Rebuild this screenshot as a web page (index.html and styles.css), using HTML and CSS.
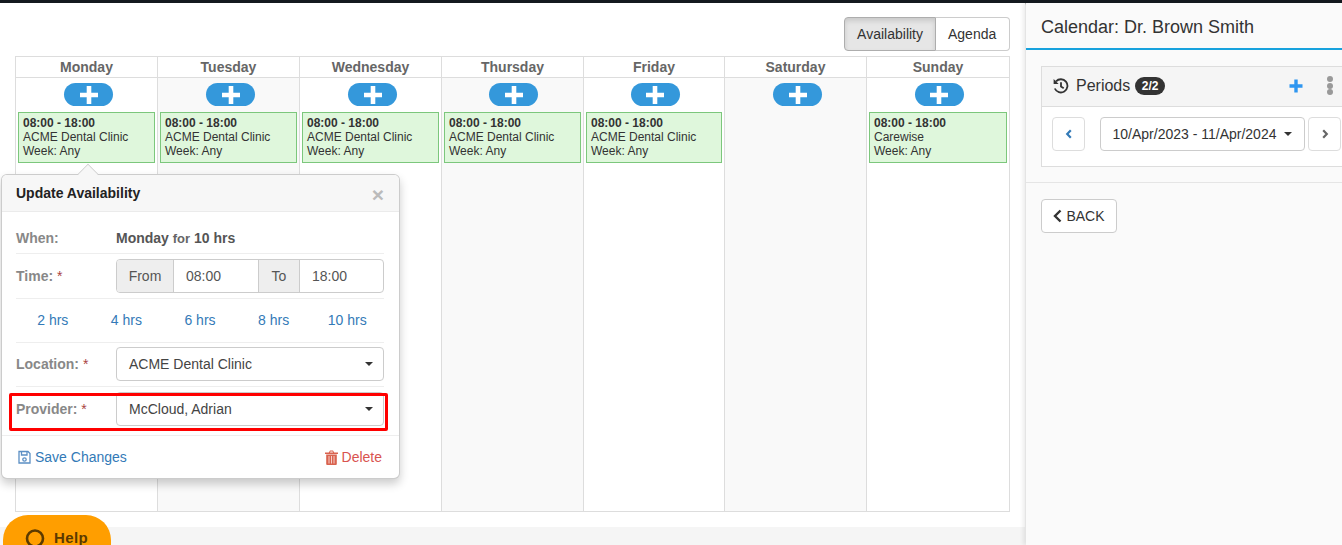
FILE: index.html
```html
<!DOCTYPE html>
<html lang="en">
<head>
	<meta charset="UTF-8">
	<title>Calendar</title>
	<link rel="stylesheet" href="styles.css">
</head>
<body>
	<div class="topbar"></div>
	<div class="page">
		<div class="main">
			<div class="toolbar">
				<div class="switch">
					<a class="switch-btn active">Availability</a>
					<a class="switch-btn">Agenda</a>
				</div>
			</div>
			<div class="calendar">
				<div class="day-head">Monday</div>
				<div class="day-head">Tuesday</div>
				<div class="day-head">Wednesday</div>
				<div class="day-head">Thursday</div>
				<div class="day-head">Friday</div>
				<div class="day-head">Saturday</div>
				<div class="day-head">Sunday</div>

				<div class="day">
					<a class="add"><svg width="18" height="18" viewBox="0 0 18 18"><path d="M9 0v18M0 9h18" stroke="#fff" stroke-width="4.6"/></svg></a>
					<div class="slot"><b>08:00 - 18:00</b><br>ACME Dental Clinic<br>Week: Any</div>
				</div>
				<div class="day shade">
					<a class="add"><svg width="18" height="18" viewBox="0 0 18 18"><path d="M9 0v18M0 9h18" stroke="#fff" stroke-width="4.6"/></svg></a>
					<div class="slot"><b>08:00 - 18:00</b><br>ACME Dental Clinic<br>Week: Any</div>
				</div>
				<div class="day">
					<a class="add"><svg width="18" height="18" viewBox="0 0 18 18"><path d="M9 0v18M0 9h18" stroke="#fff" stroke-width="4.6"/></svg></a>
					<div class="slot"><b>08:00 - 18:00</b><br>ACME Dental Clinic<br>Week: Any</div>
				</div>
				<div class="day shade">
					<a class="add near"><svg width="18" height="18" viewBox="0 0 18 18"><path d="M9 0v18M0 9h18" stroke="#fff" stroke-width="4.6"/></svg></a>
					<div class="slot"><b>08:00 - 18:00</b><br>ACME Dental Clinic<br>Week: Any</div>
				</div>
				<div class="day">
					<a class="add near"><svg width="18" height="18" viewBox="0 0 18 18"><path d="M9 0v18M0 9h18" stroke="#fff" stroke-width="4.6"/></svg></a>
					<div class="slot"><b>08:00 - 18:00</b><br>ACME Dental Clinic<br>Week: Any</div>
				</div>
				<div class="day shade">
					<a class="add"><svg width="18" height="18" viewBox="0 0 18 18"><path d="M9 0v18M0 9h18" stroke="#fff" stroke-width="4.6"/></svg></a>
				</div>
				<div class="day">
					<a class="add near"><svg width="18" height="18" viewBox="0 0 18 18"><path d="M9 0v18M0 9h18" stroke="#fff" stroke-width="4.6"/></svg></a>
					<div class="slot"><b>08:00 - 18:00</b><br>Carewise<br>Week: Any</div>
				</div>
			</div>
		</div>

		<div class="side">
			<div class="side-title">Calendar: Dr. Brown Smith</div>
			<div class="panel">
				<div class="panel-head">
					<svg class="history" width="16" height="16" viewBox="0 0 16 16" fill="none" stroke="#333" stroke-width="1.8"><path d="M3 3.400A6.600 6.600 0 1 1 1.800 10.500"/><path d="M.6 1v5h5z" fill="#333" stroke="none"/><path d="M8 4.200v4.300l2.700 1.800"/></svg>
					<span class="panel-title">Periods</span>
					<span class="badge">2/2</span>
					<svg class="plus" width="14" height="14" viewBox="0 0 14 14"><path d="M7 .5v13M.5 7h13" stroke="#2f96f0" stroke-width="3.400"/></svg>
					<span class="dots"><i></i><i></i><i></i></span>
				</div>
				<div class="panel-body">
					<a class="btn square"><svg width="8" height="10" viewBox="0 0 8 10"><path d="M5.800 1.200 2.200 5l3.600 3.800" fill="none" stroke="#337ab7" stroke-width="2.200"/></svg></a>
					<a class="btn range">10/Apr/2023 - 11/Apr/2024<span class="caret"></span></a>
					<a class="btn square"><svg width="8" height="10" viewBox="0 0 8 10"><path d="M2.200 1.200 5.800 5 2.200 8.800" fill="none" stroke="#666" stroke-width="2.200"/></svg></a>
				</div>
			</div>
			<div class="side-rule"></div>
			<a class="btn back"><svg width="9" height="14" viewBox="0 0 9 14"><path d="M7.500 1.500 2 7l5.500 5.500" fill="none" stroke="#333" stroke-width="2.400"/></svg>BACK</a>
		</div>
	</div>

	<div class="popover">
		<div class="pop-arrow"></div>
		<div class="pop-head">Update Availability<span class="close">&times;</span></div>
		<div class="pop-body">
			<div class="row when">
				<span class="label">When:</span>
				<span class="when-text"><b>Monday</b> <small>for</small> <b>10 hrs</b></span>
			</div>
			<div class="row time">
				<span class="label">Time: <em>*</em></span>
				<div class="time-group">
					<span class="addon from">From</span>
					<span class="time-val first">08:00</span>
					<span class="addon to">To</span>
					<span class="time-val">18:00</span>
				</div>
			</div>
			<div class="row hours">
				<a>2 hrs</a><a>4 hrs</a><a>6 hrs</a><a>8 hrs</a><a>10 hrs</a>
			</div>
			<div class="row location">
				<span class="label">Location: <em>*</em></span>
				<div class="select">ACME Dental Clinic<span class="caret"></span></div>
			</div>
			<div class="row last">
				<span class="label">Provider: <em>*</em></span>
				<div class="select">McCloud, Adrian<span class="caret"></span></div>
			</div>
		</div>
		<div class="pop-foot">
			<a class="save"><svg width="13" height="14" viewBox="0 0 13 14" fill="none" stroke="#5b8fc4" stroke-width="1.300"><path d="M1 1.500h9l2 2v9.500H1z"/><path d="M3.500 1.500v3.500h5.500v-3.500"/><circle cx="6.500" cy="9.500" r="1.700"/></svg>Save Changes</a>
			<a class="delete"><svg width="13" height="15" viewBox="0 0 13 15"><path d="M0 2.500h13v1.500H0zM3.800 2.500 5 .5h3l1.200 2H8L7.500 1.600h-2L5 2.500z" fill="#d9634f"/><path d="M1.200 4.500h10.600v9.500a1 1 0 0 1-1 1H2.200a1 1 0 0 1-1-1z" fill="#d9634f"/><path d="M4 6v7.500M6.500 6v7.500M9 6v7.500" stroke="#f7cfc9" stroke-width="1"/></svg>Delete</a>
		</div>
	</div>
	<div class="mark"></div>

	<a class="help"><svg width="20" height="20" viewBox="0 0 20 20" fill="none" stroke="#5c3a00" stroke-width="2.600"><circle cx="10" cy="10.500" r="8"/></svg><span class="help-text">Help</span></a>
</body>
</html>
```

FILE: styles.css
```css
* {
	box-sizing: border-box;
}

html, body {
	margin: 0;
	height: 545px;
	overflow: hidden;
}

body {
	font-family: "Liberation Sans", Arial, sans-serif;
	font-size: 14px;
	color: #333;
	background: #f5f5f5;
}

a {
	cursor: pointer;
}

.topbar {
	height: 3px;
	background: #14191f;
	box-shadow: 0 1px 2px rgba(0,0,0,0.3);
}

.page {
	display: flex;
	height: 542px;
}

/* calendar side */
.main {
	width: 1025px;
	height: 524px;
	padding: 14px 15px 0;
	background: #fff;
}

.toolbar {
	display: flex;
	justify-content: flex-end;
	height: 39px;
}

.switch {
	display: flex;
	height: 34px;
}

.switch-btn {
	padding: 0 12px;
	line-height: 32px;
	border: 1px solid #ccc;
}

.switch-btn:first-child {
	border-radius: 4px 0 0 4px;
}

.switch-btn:last-child {
	width: 74px;
	border-left: 0;
	border-radius: 0 4px 4px 0;
}

.switch-btn.active {
	background: #e6e6e6;
	border-color: #adadad;
	box-shadow: inset 0 3px 5px rgba(0,0,0,0.125);
}

.calendar {
	display: grid;
	grid-template-columns: 142px 142px 142px 142px 141px 142px 143px;
	grid-template-rows: 21px 434px;
	width: 995px;
	border-top: 1px solid #ddd;
	border-left: 1px solid #ddd;
}

.day-head {
	border-right: 1px solid #ddd;
	border-bottom: 1px solid #ddd;
	font-weight: bold;
	line-height: 20px;
	text-align: center;
	color: #666;
}

.day {
	display: flex;
	flex-direction: column;
	align-items: center;
	padding: 5px 2px 0;
	border-right: 1px solid #ddd;
	border-bottom: 1px solid #ddd;
}

.shade {
	background: #f9f9f9;
}

.add {
	display: flex;
	align-items: center;
	justify-content: center;
	width: 49px;
	height: 23px;
	margin-left: 4px;
	border-radius: 12px;
	background: #3498db;
}

.add.near {
	margin-left: 2px;
}

.slot {
	width: 100%;
	height: 51px;
	margin-top: 6px;
	padding: 3px 4px 0;
	border: 1px solid #7cc77c;
	background: #dff7dc;
	font-size: 12px;
	line-height: 14px;
}

/* right panel */
.side {
	flex: 1;
	margin-left: 1px;
	background: #fafafa;
	box-shadow: -3px 0 4px rgba(0,0,0,0.08);
}

.side-title {
	height: 47px;
	padding: 13px 15px 0;
	border-bottom: 2px solid #17a2dd;
	font-size: 18px;
	line-height: 22px;
}

.panel {
	width: 316px;
	height: 101px;
	margin: 16px 0 0 15px;
	border: 1px solid #ddd;
	background: #fff;
}

.panel-head {
	display: flex;
	align-items: center;
	height: 40px;
	padding: 0 11px 2px;
	border-bottom: 1px solid #ddd;
	background: #f5f5f5;
}

.panel-title {
	margin-left: 7px;
	font-size: 16px;
}

.badge {
	margin-left: 5px;
	padding: 0 6.5px;
	border-radius: 10px;
	background: #333;
	color: #fff;
	font-size: 12px;
	font-weight: bold;
	line-height: 18px;
}

.plus {
	margin-left: 124px;
}

.dots {
	display: flex;
	flex-direction: column;
	gap: 0.5px;
	margin-left: 24px;
}

.dots i {
	width: 6px;
	height: 6px;
	border-radius: 50%;
	background: #999;
}

.panel-body {
	display: flex;
	padding: 10px;
}

.btn {
	display: flex;
	align-items: center;
	justify-content: center;
	height: 34px;
	border: 1px solid #ccc;
	border-radius: 4px;
	background: #fff;
}

.square {
	width: 33px;
	border-color: #ddd;
}

.range {
	width: 205px;
	margin: 0 3px 0 15px;
	color: #333;
}

.caret {
	display: inline-block;
	width: 0;
	height: 0;
	margin-left: 6px;
	border-top: 4px solid #333;
	border-left: 4px solid transparent;
	border-right: 4px solid transparent;
}

.range .caret {
	margin-left: 8px;
}

.side-rule {
	margin-top: 15px;
	border-top: 1px solid #e5e5e5;
}

.back {
	gap: 4px;
	width: 76px;
	margin: 16px 0 0 15px;
}

/* popover */
.popover {
	position: absolute;
	left: 1px;
	top: 174px;
	width: 399px;
	height: 305px;
	border: 1px solid rgba(0,0,0,0.2);
	border-radius: 6px;
	background: #fff;
	box-shadow: 0 5px 10px rgba(0,0,0,0.2);
}

.pop-arrow {
	position: absolute;
	left: 76px;
	top: -11px;
	width: 20px;
	height: 20px;
	border-top: 1px solid #ccc;
	border-left: 1px solid #ccc;
	background: #f7f7f7;
	transform: rotate(45deg) scale(0.72);
}

.pop-head {
	position: relative;
	height: 37px;
	padding: 0 14px;
	border-bottom: 1px solid #ebebeb;
	border-radius: 5px 5px 0 0;
	background: #f7f7f7;
	font-weight: bold;
	line-height: 37px;
	color: #222;
}

.close {
	position: absolute;
	right: 15px;
	top: 1px;
	font-size: 21px;
	color: #bbb;
}

.pop-body {
	padding: 0 15px 0 14px;
}

.row {
	display: flex;
	align-items: center;
	border-bottom: 1px solid #eee;
	height: 44px;
}

.row.when {
	height: 42px;
	padding-top: 10px;
}

.row.time {
	height: 45px;
}

.row.hours {
	display: grid;
	grid-template-columns: repeat(5, 1fr);
	padding-bottom: 1px;
	text-align: center;
}

.row.location {
	padding-bottom: 1px;
}

.row.last {
	border-bottom: 0;
	height: 48px;
	padding-bottom: 4px;
}

.label {
	flex: none;
	width: 100px;
	font-weight: bold;
	color: #888;
}

.label em {
	font-style: normal;
	font-weight: normal;
	color: #a94442;
}

.when-text {
	color: #555;
}

.when-text small {
	font-size: 13px;
	font-weight: bold;
	color: #666;
}

.time-group {
	display: flex;
	width: 268px;
	height: 34px;
	border: 1px solid #ccc;
	border-radius: 4px;
	line-height: 32px;
	overflow: hidden;
}

.addon {
	flex: none;
	text-align: center;
	color: #555;
	background: #eee;
}

.from {
	width: 57px;
	border-right: 1px solid #ccc;
}

.to {
	width: 41px;
	border-right: 1px solid #ccc;
}

.time-val {
	flex: 1;
	padding-left: 12px;
	color: #555;
}

.time-val.first {
	flex: none;
	width: 85px;
	border-right: 1px solid #ccc;
}

.hours a {
	color: #337ab7;
}

.select {
	display: flex;
	align-items: center;
	justify-content: space-between;
	width: 268px;
	height: 34px;
	padding: 0 10px 0 12px;
	border: 1px solid #ccc;
	border-radius: 4px;
	color: #444;
}

.pop-foot {
	display: flex;
	justify-content: space-between;
	padding: 13px 17px 0 16px;
	border-top: 1px solid #eee;
}

.save {
	display: flex;
	align-items: center;
	gap: 4px;
	color: #337ab7;
}

.delete {
	display: flex;
	align-items: center;
	gap: 4px;
	color: #d9534f;
}

/* red annotation round the provider row */
.mark {
	position: absolute;
	left: 9px;
	top: 393px;
	width: 379px;
	height: 38px;
	border: 3px solid #f00;
	border-radius: 2px;
}

.help {
	position: absolute;
	left: 3px;
	top: 515px;
	display: flex;
	gap: 9px;
	width: 108px;
	height: 30px;
	padding: 13px 0 0 22px;
	border-radius: 25px 25px 0 0;
	background: #ff9e00;
	color: #5c3a00;
	font-size: 15px;
	font-weight: bold;
	letter-spacing: 0.4px;
	line-height: 14px;
	overflow: hidden;
}

.help svg {
	flex: none;
}

.help-text {
	margin-top: 3px;
}
```
